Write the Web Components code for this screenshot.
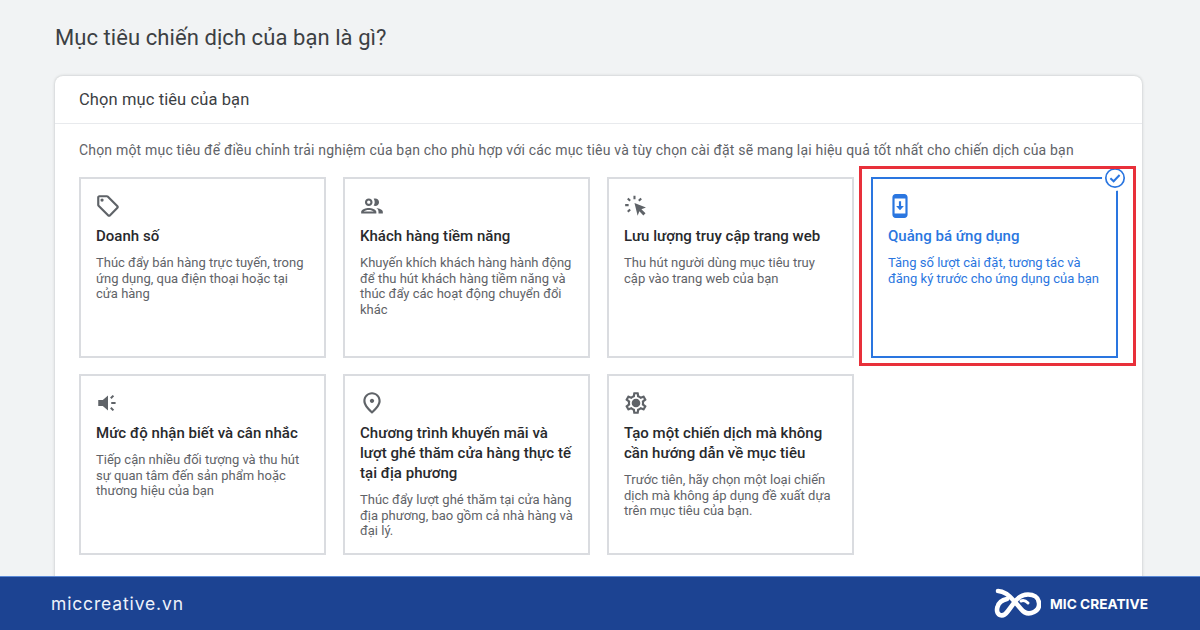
<!doctype html>
<html lang="vi">
<head>
<meta charset="utf-8">
<title>Mục tiêu chiến dịch</title>
<style>
  html, body { margin: 0; height: 630px; overflow: hidden; }
  body { display: flex; flex-direction: column; background: #f1f3f4; font-family: Roboto, "Liberation Sans", sans-serif; color: #3c4043; }
</style>
</head>
<body>
<goal-page>
  <span slot="title">Mục tiêu chiến dịch của bạn là gì?</span>
  <span slot="head">Chọn mục tiêu của bạn</span>
  <span slot="intro">Chọn một mục tiêu để điều chỉnh trải nghiệm của bạn cho phù hợp với các mục tiêu và tùy chọn cài đặt sẽ mang lại hiệu quả tốt nhất cho chiến dịch của bạn</span>
  <goal-card icon="tag" title="Doanh số">Thúc đẩy bán hàng trực tuyến, trong ứng dụng, qua điện thoại hoặc tại cửa hàng</goal-card>
  <goal-card icon="people" title="Khách hàng tiềm năng">Khuyến khích khách hàng hành động để thu hút khách hàng tiềm năng và thúc đẩy các hoạt động chuyển đổi khác</goal-card>
  <goal-card icon="click" title="Lưu lượng truy cập trang web">Thu hút người dùng mục tiêu truy cập vào trang web của bạn</goal-card>
  <goal-card icon="phone" title="Quảng bá ứng dụng" selected>Tăng số lượt cài đặt, tương tác và đăng ký trước cho ứng dụng của bạn</goal-card>
  <goal-card icon="speaker" title="Mức độ nhận biết và cân nhắc">Tiếp cận nhiều đối tượng và thu hút sự quan tâm đến sản phẩm hoặc thương hiệu của bạn</goal-card>
  <goal-card icon="pin" title="Chương trình khuyến mãi và lượt ghé thăm cửa hàng thực tế tại địa phương">Thúc đẩy lượt ghé thăm tại cửa hàng địa phương, bao gồm cả nhà hàng và đại lý.</goal-card>
  <goal-card icon="gear" title="Tạo một chiến dịch mà không cần hướng dẫn về mục tiêu">Trước tiên, hãy chọn một loại chiến dịch mà không áp dụng đề xuất dựa trên mục tiêu của bạn.</goal-card>
</goal-page>
<brand-bar></brand-bar>

<script>
const ICONS = {
  tag: `<path d="M21.41 11.58l-9-9C12.05 2.22 11.55 2 11 2H4c-1.1 0-2 .9-2 2v7c0 .55.22 1.05.59 1.42l9 9c.36.36.86.58 1.41.58s1.05-.22 1.41-.59l7-7c.37-.36.59-.86.59-1.41s-.23-1.06-.59-1.42zM13 20.01L4 11V4h7v-.01l9 8.99-7 7.02z"/><circle cx="6.5" cy="6.5" r="1.5"/>`,
  people: `<path d="M9 13.75c-2.34 0-7 1.17-7 3.5V19h14v-1.75c0-2.33-4.66-3.5-7-3.5zM4.34 17c.84-.58 2.87-1.25 4.66-1.25s3.82.67 4.66 1.25H4.34zM9 12c1.93 0 3.5-1.57 3.5-3.5S10.93 5 9 5 5.5 6.57 5.5 8.5 7.07 12 9 12zm0-5c.83 0 1.5.67 1.5 1.5S9.83 10 9 10s-1.5-.67-1.5-1.5S8.17 7 9 7zm7.04 6.81c1.16.84 1.96 1.96 1.96 3.44V19h4v-1.75c0-2.02-3.5-3.17-5.96-3.44zM15 12c1.93 0 3.5-1.57 3.5-3.5S16.93 5 15 5c-.54 0-1.04.13-1.5.35.63.89 1 1.98 1 3.15s-.37 2.26-1 3.15c.46.22.96.35 1.5.35z"/>`,
  click: `<path d="M10.6 9.2l10.6 4.2-4.2 1.6 3.8 3.7-2 2-3.7-3.8-1.6 4.2z"/><path d="M10.6 2.5v3.2M4.4 5l2.2 2.2M2 11.2h3.2M4.4 17.4l2.2-2.2M16.8 5l-2.2 2.2" fill="none" stroke="currentColor" stroke-width="1.9"/>`,
  phone: `<path fill-rule="evenodd" d="M8 1h8c1.7 0 3 1.3 3 3v16c0 1.7-1.3 3-3 3H8c-1.7 0-3-1.3-3-3V4c0-1.7 1.3-3 3-3zM7 5v14h10V5z"/><path d="M11 7.5h2v4.5h2.6L12 16l-3.6-4H11z"/>`,
  speaker: `<path d="M3 9.2h4.2L12 5v14l-4.8-4.2H3z"/><path d="M15 12h4M14.6 7.6l2.4-2.4M14.6 16.4l2.4 2.4" fill="none" stroke="currentColor" stroke-width="1.9"/>`,
  pin: `<path d="M12 12c-1.1 0-2-.9-2-2s.9-2 2-2 2 .9 2 2-.9 2-2 2zm6-1.8C18 6.57 15.35 4 12 4s-6 2.57-6 6.2c0 2.34 1.95 5.44 6 9.14 4.05-3.7 6-6.8 6-9.14zM12 2c4.2 0 8 3.22 8 8.2 0 3.32-2.67 7.25-8 11.8-5.33-4.55-8-8.48-8-11.8C4 5.22 7.8 2 12 2z"/>`,
  gear: `<path d="M19.43 12.98c.04-.32.07-.64.07-.98 0-.34-.03-.66-.07-.98l2.11-1.65c.19-.15.24-.42.12-.64l-2-3.46c-.09-.16-.26-.25-.44-.25-.06 0-.12.01-.17.03l-2.49 1c-.52-.4-1.08-.73-1.69-.98l-.38-2.65C14.46 2.18 14.25 2 14 2h-4c-.25 0-.46.18-.49.42l-.38 2.65c-.61.25-1.17.59-1.69.98l-2.49-1c-.06-.02-.12-.03-.18-.03-.17 0-.34.09-.43.25l-2 3.46c-.13.22-.07.49.12.64l2.11 1.65c-.04.32-.07.65-.07.98 0 .33.03.66.07.98l-2.11 1.65c-.19.15-.24.42-.12.64l2 3.46c.09.16.26.25.44.25.06 0 .12-.01.17-.03l2.49-1c.52.4 1.08.73 1.69.98l.38 2.65c.03.24.24.42.49.42h4c.25 0 .46-.18.49-.42l.38-2.65c.61-.25 1.17-.59 1.69-.98l2.49 1c.06.02.12.03.18.03.17 0 .34-.09.43-.25l2-3.46c.12-.22.07-.49-.12-.64l-2.11-1.65zm-1.98-1.71c.04.31.05.52.05.73 0 .21-.02.43-.05.73l-.14 1.13.89.7 1.08.84-.7 1.21-1.27-.51-1.04-.42-.9.68c-.43.32-.84.56-1.25.73l-1.06.43-.16 1.13-.2 1.35h-1.4l-.19-1.35-.16-1.13-1.06-.43c-.43-.18-.83-.41-1.23-.71l-.91-.7-1.06.43-1.27.51-.7-1.21 1.08-.84.89-.7-.14-1.13c-.03-.31-.05-.54-.05-.74s.02-.43.05-.73l.14-1.13-.89-.7-1.08-.84.7-1.21 1.27.51 1.04.42.9-.68c.43-.32.84-.56 1.25-.73l1.06-.43.16-1.13.2-1.35h1.39l.19 1.35.16 1.13 1.06.43c.43.18.83.41 1.23.71l.91.7 1.06-.43 1.27-.51.7 1.21-1.07.85-.89.7.14 1.13zM12 8c-2.21 0-4 1.79-4 4s1.79 4 4 4 4-1.79 4-4-1.79-4-4-4z"/><circle cx="12" cy="12" r="2.4"/>`,
};


class GoalCard extends HTMLElement {
  connectedCallback() {
    if (this.shadowRoot) return;

    const selected = this.hasAttribute('selected');
    const icon = ICONS[this.getAttribute('icon')] || '';
    const root = this.attachShadow({mode: 'open'});

    root.innerHTML = `
      <style>
        :host {
          display: block;
          position: relative;
          box-sizing: border-box;
          padding: 14px 15px 0 15px;
          background: #fff;
          border: 2px solid #dadce0;
          color: #5f6368;
        }
        :host([selected]) {
          border-color: #2a76e0;
          color: #2a76e0;
        }
        svg.icon {
          display: block;
          width: 26px;
          height: 26px;
          margin-left: -1px;
          fill: currentColor;
        }
        h3 {
          margin: 7px -3px 9px 0;
          font: 500 15px/20px Roboto, sans-serif;
          letter-spacing: .03px;
          color: #28292c;
        }
        :host([selected]) h3 { color: #2a76e0; }
        p {
          margin: 0;
          font: 400 13px/15.7px Roboto, sans-serif;
        }
        .check {
          position: absolute;
          top: -14px;
          right: -12px;
          width: 26px;
          height: 26px;
        }
      </style>
      <svg class="icon" viewBox="0 0 24 24" aria-hidden="true">${icon}</svg>
      <h3>${this.getAttribute('title')}</h3>
      <p><slot></slot></p>
      ${selected ? `<svg class="check" viewBox="0 0 26 26" aria-hidden="true">
        <circle cx="13" cy="13" r="13" fill="#fff"/>
        <circle cx="13" cy="13" r="9.2" fill="#fff" stroke="#2a76e0" stroke-width="1.7"/>
        <path d="M8.4 13.3l3.2 3 6-6.3" fill="none" stroke="#2a76e0" stroke-width="2"/>
      </svg>` : ''}
    `;
    this.removeAttribute('title');
  }
}


class GoalPage extends HTMLElement {
  constructor() {
    super();
    this.attachShadow({mode: 'open'}).innerHTML = `
      <style>
        :host {
          display: block;
          flex: 1;
          min-height: 0;
          padding: 0 58px 0 55px;
          overflow: hidden;
        }
        h1 {
          margin: 0;
          padding: 23px 0 24px;
          font: 400 22px/29px Roboto, sans-serif;
          letter-spacing: .07px;
          color: #3c4043;
        }
        .panel {
          position: relative;
          height: 600px;
          background: #fff;
          border-radius: 8px 8px 0 0;
          box-shadow: 0 0 3px rgba(60, 64, 67, .3);
        }
        header {
          box-sizing: border-box;
          height: 48px;
          padding: 0 24px;
          display: flex;
          align-items: center;
          border-bottom: 1px solid #e8eaed;
          font: 400 16.5px/20px Roboto, sans-serif;
          letter-spacing: .1px;
          color: #3c4043;
        }
        .body { padding: 17px 24px 0; }
        .intro {
          font: 400 14px/18px Roboto, sans-serif;
          letter-spacing: .188px;
          color: #5f6368;
          margin-bottom: 18px;
          white-space: nowrap;
        }
        .grid {
          display: grid;
          grid-template-columns: repeat(4, 247px);
          grid-template-rows: 181px 181px;
          column-gap: 17px;
          row-gap: 16px;
        }
        .highlight {
          position: absolute;
          left: 804px;
          top: 90px;
          width: 271px;
          height: 194px;
          border: 3px solid #e8303a;
          pointer-events: none;
        }
      </style>
      <h1><slot name="title"></slot></h1>
      <div class="panel">
        <header><slot name="head"></slot></header>
        <div class="body">
          <div class="intro"><slot name="intro"></slot></div>
          <div class="grid"><slot></slot></div>
        </div>
        <div class="highlight"></div>
      </div>
    `;
  }
}


class BrandBar extends HTMLElement {
  constructor() {
    super();
    this.attachShadow({mode: 'open'}).innerHTML = `
      <style>
        :host {
          display: flex;
          flex: none;
          box-sizing: border-box;
          height: 54px;
          padding: 0 52px 0 51px;
          align-items: center;
          justify-content: space-between;
          background: #1c4392;
          border-top: 1px solid #5c8ad6;
          color: #fff;
        }
        .site {
          font: 400 17.5px/24px Inter, sans-serif;
          letter-spacing: .85px;
          color: #eef2fb;
        }
        .logo { display: flex; align-items: center; gap: 9px; }
        svg { width: 48px; height: 32px; display: block; }
        .name {
          font: 700 13.7px/20px Inter, sans-serif;
        }
      </style>
      <span class="site">miccreative.vn</span>
      <span class="logo">
        <svg viewBox="0 0 48 32" fill="none" stroke="#fff" stroke-width="4.6" stroke-linecap="round" aria-hidden="true">
          <path d="M5 3C12 3 17 8 22 14l6 7c4 5 9 5 13 3 4-2 5.5-5 5-9-.5-6-6-8.500-11-8.500-6 0-10 2.500-14 8.500l-6 8c-3 4-6 5-8 4-3-1-3.500-5-2.500-8 1-4 4.500-7 9.500-8"/>
          <path d="M28 13c2.500-1 5 0 7 2" stroke-width="3"/>
        </svg>
        <span class="name">MIC CREATIVE</span>
      </span>
    `;
  }
}


customElements.define('goal-card', GoalCard);
customElements.define('goal-page', GoalPage);
customElements.define('brand-bar', BrandBar);
</script>
</body>
</html>
